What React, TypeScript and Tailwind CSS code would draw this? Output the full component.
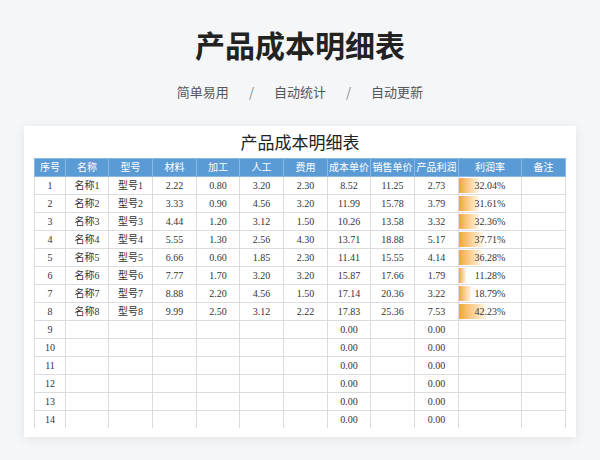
export default function App() {
  const data = [
    [2.22, 0.8, 3.2, 2.3, 8.52, 11.25, 2.73, 32.04],
    [3.33, 0.9, 4.56, 3.2, 11.99, 15.78, 3.79, 31.61],
    [4.44, 1.2, 3.12, 1.5, 10.26, 13.58, 3.32, 32.36],
    [5.55, 1.3, 2.56, 4.3, 13.71, 18.88, 5.17, 37.71],
    [6.66, 0.6, 1.85, 2.3, 11.41, 15.55, 4.14, 36.28],
    [7.77, 1.7, 3.2, 3.2, 15.87, 17.66, 1.79, 11.28],
    [8.88, 2.2, 4.56, 1.5, 17.14, 20.36, 3.22, 18.79],
    [9.99, 2.5, 3.12, 2.22, 17.83, 25.36, 7.53, 42.23],
  ];
  const widths = [31, 43, 44, 44, 43, 44, 44, 43, 44, 44, 63, 44];
  const heads = ["序号", "名称", "型号", "材料", "加工", "人工", "费用", "成本单价", "销售单价", "产品利润", "利润率", "备注"];
  const serif = { fontFamily: '"Liberation Serif","Noto Sans CJK SC",serif' };
  const rows = Array.from({ length: 14 }, (_, i) => i);
  return (
    <div className="w-[600px] h-[460px] bg-[#f5f6f8] flex flex-col items-center overflow-hidden" style={{ fontFamily: '"Noto Sans CJK SC",sans-serif' }}>
      <div className="mt-[24px] text-[30px] leading-[40px] font-bold text-[#222]">产品成本明细表</div>
      <div className="mt-[18px] text-[13px] leading-[20px] text-[#555] flex gap-[20px]">
        <span>简单易用</span><span className="text-[#888]">/</span><span>自动统计</span><span className="text-[#888]">/</span><span>自动更新</span>
      </div>
      <div className="mt-[24px] w-[552px] h-[311px] bg-white shadow-[0_2px_10px_rgba(0,0,0,0.08)] flex flex-col items-center overflow-hidden">
        <div className="h-[32px] flex items-center text-[17px] text-[#222] pt-[4px]" style={serif}>产品成本明细表</div>
        <div className="h-[270px] overflow-hidden">
          <table className="border-collapse text-[10px] text-[#333]" style={serif}>
            <thead>
              <tr className="h-[18px] bg-[#5b9bd5] text-white">
                {heads.map((h, i) => (
                  <th key={i} className="font-normal border border-[#8ab8e3] p-0" style={{ width: widths[i] }}>{h}</th>
                ))}
              </tr>
            </thead>
            <tbody>
              {rows.map((i) => {
                const d = data[i];
                const cells = d
                  ? [String(i + 1), "名称" + (i + 1), "型号" + (i + 1), ...d.slice(0, 7).map((v) => v.toFixed(2))]
                  : [String(i + 1), "", "", "", "", "", "", "0.00", "", "0.00"];
                return (
                  <tr key={i} className="h-[18px]">
                    {cells.map((c, j) => (
                      <td key={j} className="border border-[#dcdcdc] text-center p-0 leading-[17px]">{c}</td>
                    ))}
                    <td className="border border-[#dcdcdc] p-0 relative">
                      {d && (
                        <>
                          <div className="absolute left-0 top-[1px] bottom-[1px] bg-gradient-to-r from-[#f5a623] to-[#fff6e6]" style={{ width: d[7] * 0.63 }} />
                          <div className="relative text-center leading-[17px]">{d[7].toFixed(2)}%</div>
                        </>
                      )}
                    </td>
                    <td className="border border-[#dcdcdc] p-0"></td>
                  </tr>
                );
              })}
            </tbody>
          </table>
        </div>
      </div>
    </div>
  );
}
